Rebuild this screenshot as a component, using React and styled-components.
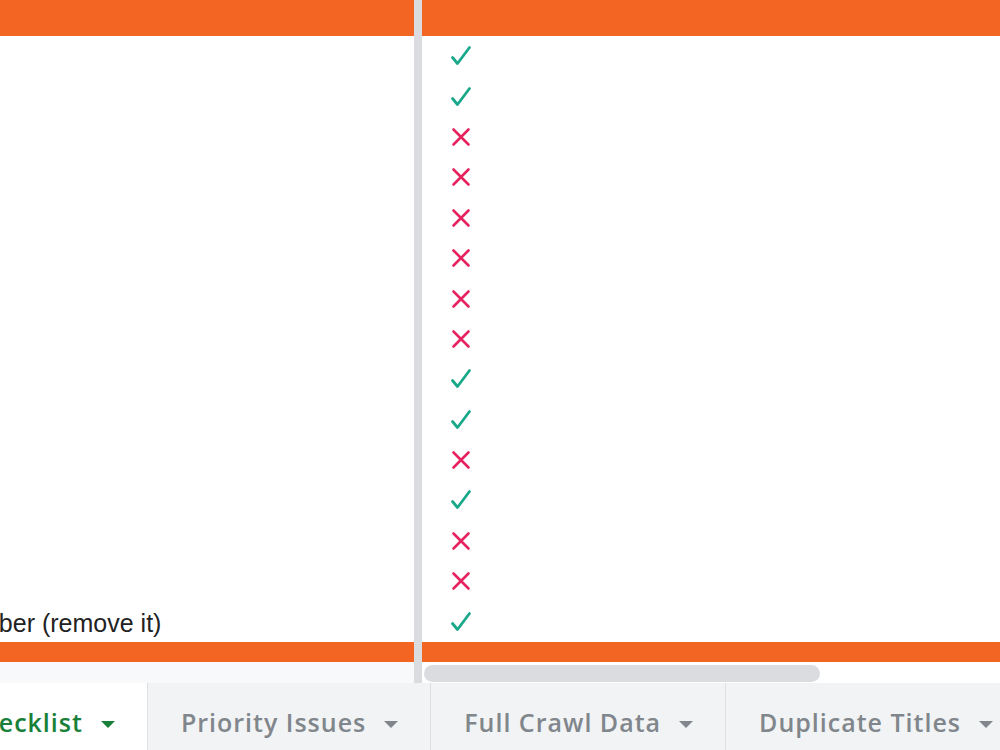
import React from 'react';
import styled, { createGlobalStyle } from 'styled-components';

const Global = createGlobalStyle`
    html, body {
        margin: 0;
        padding: 0;
        background: #ffffff;
        overflow: hidden;
    }
    body {
        width: 1000px;
        height: 750px;
        font-family: "Liberation Sans", Arial, sans-serif;
    }
`;

const ORANGE = '#f26522';
const ROW_H = 40.4;

const results = [true, true, false, false, false, false, false, false, true, true, false, true, false, false, true];

export default function App() {
    return (
        <>
            <Global />
            <Page>
                <Sheet>
                    <LeftPane>
                        <HeaderBar />
                        {results.map((ok, i) => (
                            <Row key={i}>
                                {i === results.length - 1 && <CellText>Phone number (remove it)</CellText>}
                            </Row>
                        ))}
                        <FooterBar />
                        <Gutter />
                    </LeftPane>
                    <Freeze />
                    <RightPane>
                        <HeaderBar />
                        {results.map((ok, i) => (
                            <Row key={i}>
                                <Mark>{ok ? <Check /> : <Cross />}</Mark>
                            </Row>
                        ))}
                        <FooterBar />
                        <ScrollTrack>
                            <Thumb />
                        </ScrollTrack>
                    </RightPane>
                </Sheet>
                <TabStrip>
                    <Tab Active>Checklist<Caret Active /></Tab>
                    <Tab>Priority Issues<Caret /></Tab>
                    <Tab>Full Crawl Data<Caret /></Tab>
                    <Tab>Duplicate Titles<Caret /></Tab>
                </TabStrip>
            </Page>
        </>
    );
}

const Check = () => (
    <svg width="22" height="22" viewBox="0 0 22 22">
        <path d="M2.5 12.5 L7.5 18.5 L19.5 2.5" fill="none" stroke="#1aa88a" strokeWidth="2.8" strokeLinecap="round" strokeLinejoin="round" />
    </svg>
);

const Cross = () => (
    <svg width="22" height="22" viewBox="0 0 22 22">
        <path d="M3.5 3.5 L18.5 18.5 M18.5 3.5 L3.5 18.5" fill="none" stroke="#e6235f" strokeWidth="2.6" strokeLinecap="round" />
    </svg>
);

const Page = styled.div`
    width: 1000px;
    height: 750px;
    display: flex;
    flex-direction: column;
    overflow: hidden;
`;

const Sheet = styled.div`
    display: flex;
    height: 683px;
`;

const LeftPane = styled.div`
    width: 414px;
    display: flex;
    flex-direction: column;
    overflow: hidden;
`;

const RightPane = styled.div`
    flex: 1;
    display: flex;
    flex-direction: column;
`;

const Freeze = styled.div`
    width: 8px;
    background: #dadce0;
`;

const HeaderBar = styled.div`
    height: 36px;
    background: ${ORANGE};
`;

const FooterBar = styled.div`
    height: 20px;
    background: ${ORANGE};
`;

const Row = styled.div`
    height: ${ROW_H}px;
    display: flex;
    align-items: center;
    background: #ffffff;
`;

const CellText = styled.span`
    font-size: 25px;
    color: #222222;
    white-space: nowrap;
    margin: 3px 0 0 -129px;
`;

const Mark = styled.span`
    display: flex;
    margin-left: 28px;
`;

const Gutter = styled.div`
    flex: 1;
    background: #f8f9fa;
`;

const ScrollTrack = styled.div`
    flex: 1;
    background: #ffffff;
    padding: 3px 0 1px 2px;
`;

const Thumb = styled.div`
    width: 396px;
    height: 17px;
    border-radius: 9px;
    background: #dadce0;
`;

const TabStrip = styled.div`
    flex: 1;
    display: flex;
    background: #f1f3f4;
    margin-left: -68px;
`;

const Tab = styled.div`
    display: flex;
    align-items: flex-start;
    padding: 22px 32px 0 33px;
    font-family: "Open Sans", sans-serif;
    font-size: 25px;
    font-weight: 600;
    letter-spacing: 1px;
    white-space: nowrap;
    color: ${props => props.Active ? '#188038' : '#80868b'};
    background: ${props => props.Active ? '#ffffff' : 'transparent'};
    border-right: 1px solid #dde0e3;
`;

const Caret = styled.span`
    width: 0;
    height: 0;
    margin: 16px 0 0 18px;
    border-left: 7px solid transparent;
    border-right: 7px solid transparent;
    border-top: 7px solid ${props => props.Active ? '#188038' : '#80868b'};
`;
